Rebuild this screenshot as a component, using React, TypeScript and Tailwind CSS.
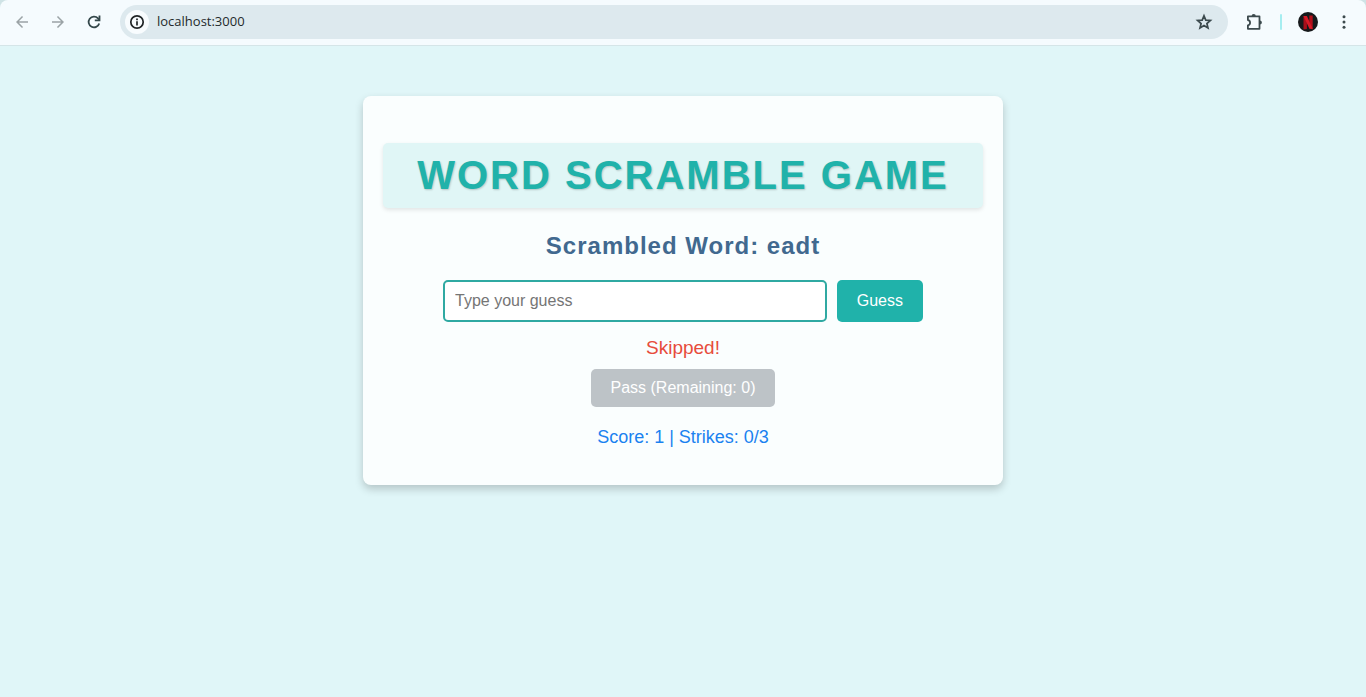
import { useState } from "react";
import { MdArrowBack, MdArrowForward } from "react-icons/md";

function ReloadIcon() {
  return (
    <svg width="20" height="20" viewBox="0 0 20 20" fill="none" stroke="#33474a" strokeWidth="1.8" aria-hidden="true">
      <path d="M15.2 11.4A5.4 5.4 0 1 1 14 6.3L15.4 7.8" />
      <path d="M15.5 3.6V8.3H10.8" />
    </svg>
  );
}

function InfoIcon() {
  return (
    <svg width="16" height="16" viewBox="0 0 16 16" fill="none" stroke="#1f2426" strokeWidth="1.7" aria-hidden="true">
      <circle cx="8" cy="8" r="6.2" />
      <path d="M8 7.2V11.4M8 4.5V6.2" />
    </svg>
  );
}

function StarIcon() {
  return (
    <svg width="20" height="20" viewBox="0 0 20 20" fill="none" stroke="#3c4a4d" strokeWidth="1.7" aria-hidden="true">
      <path d="M10 3.8 11.8 8.1 16.4 8.5 12.9 11.5 14 16 10 13.6 6 16 7.1 11.5 3.6 8.5 8.2 8.1Z" />
    </svg>
  );
}

function ExtensionIcon() {
  return (
    <svg width="20" height="20" viewBox="0 0 20 20" aria-hidden="true">
      <path d="M3.9 4.4H15.5V16.8H3.9V13.3a2.7 2.7 0 0 0 0-5.3Z" fill="none" stroke="#3c4a4d" strokeWidth="1.8" strokeLinejoin="round" />
      <path d="M7.6 4.2a2.1 2.1 0 0 1 4.2 0ZM15.8 8.4a2.1 2.1 0 0 1 0 4.2Z" fill="#3c4a4d" />
    </svg>
  );
}

function MenuIcon() {
  return (
    <svg width="20" height="20" viewBox="0 0 20 20" fill="#3c4a4d" aria-hidden="true">
      <circle cx="10" cy="4.7" r="1.5" />
      <circle cx="10" cy="10" r="1.5" />
      <circle cx="10" cy="15.3" r="1.5" />
    </svg>
  );
}

function ProfilePicture() {
  return (
    <svg width="20" height="20" viewBox="0 0 20 20" aria-hidden="true">
      <circle cx="10" cy="10" r="10" fill="#16191b" />
      <path d="M5.5 4h3.4v13l-3.4.6Z" fill="#a80f1a" />
      <path d="M11.3 3.6h3.4v13.6l-3.4-.5Z" fill="#b30f1a" />
      <path d="M5.5 4h3.4l5.8 13-3.4-.4Z" fill="#d81a26" />
    </svg>
  );
}

function BrowserBar() {
  return (
    <header className="bg-[#cfe3e6]">
      <div className="flex h-[46px] items-center rounded-t-lg border-b border-[#d5e5e8] bg-[#f5fbfe] px-3 pb-0.5">
        <nav className="flex shrink-0 gap-4" aria-label="Browser">
          <button aria-label="Back" className="flex size-5 items-center justify-center text-[#9ba3a6]">
            <MdArrowBack size={18} />
          </button>
          <button aria-label="Forward" className="flex size-5 items-center justify-center text-[#9ba3a6]">
            <MdArrowForward size={18} />
          </button>
          <button aria-label="Reload" className="flex size-5 items-center justify-center">
            <ReloadIcon />
          </button>
        </nav>
        <div className="ml-4 flex h-[34px] min-w-0 flex-1 items-center rounded-full bg-[#dde9ee] pr-3.5 pl-[5px]">
          <button aria-label="Site information" className="flex size-6 shrink-0 items-center justify-center rounded-full bg-[#f8fcfe]">
            <InfoIcon />
          </button>
          <input
            aria-label="Address"
            defaultValue="localhost:3000"
            className="ml-2 min-w-0 flex-1 bg-transparent font-['Open_Sans','Noto_Sans',sans-serif] text-[13px] text-[#24292b] outline-none"
          />
          <button aria-label="Bookmark this page" className="flex size-5 shrink-0 items-center justify-center">
            <StarIcon />
          </button>
        </div>
        <div className="ml-4 flex shrink-0 items-center">
          <button aria-label="Extensions" className="flex">
            <ExtensionIcon />
          </button>
          <span className="ml-4 h-4 w-0.5 rounded-full bg-[#a5edf0]" />
          <button aria-label="Profile" className="ml-4 flex">
            <ProfilePicture />
          </button>
          <button aria-label="Menu" className="ml-4 flex">
            <MenuIcon />
          </button>
        </div>
      </div>
    </header>
  );
}

export default function App() {
  const [guess, setGuess] = useState("");

  return (
    <div className="flex min-h-screen flex-col bg-[#e0f6f8] font-['Liberation_Sans',Arial,sans-serif]">
      <BrowserBar />
      <main className="mx-auto my-[50px] w-full max-w-[640px] rounded-lg bg-[#fafefe] px-5 pt-[47px] pb-[38px] text-center shadow-[0_4px_8px_rgba(0,0,0,0.2)]">
        <h1 className="rounded-[5px] bg-[#e0f6f6] py-2.5 text-[40px] leading-[45px] font-bold tracking-[2px] text-[#20b2aa] uppercase shadow-[0_2px_4px_rgba(0,0,0,0.1)] [text-shadow:1px_1px_2px_rgba(0,0,0,0.2)]">
          Word Scramble Game
        </h1>
        <h2 className="mt-6 text-2xl leading-7 font-bold tracking-[1px] text-[#41698f]">Scrambled Word: eadt</h2>
        <form className="mx-auto mt-5 flex w-4/5 gap-2.5" onSubmit={(event) => event.preventDefault()}>
          <input
            type="text"
            aria-label="Your guess"
            placeholder="Type your guess"
            value={guess}
            onChange={(event) => setGuess(event.target.value)}
            className="h-[42px] min-w-0 flex-1 rounded-[5px] border-2 border-[#2fa9a2] bg-white px-2.5 text-base text-[#333333] outline-none placeholder:text-[#757575]"
          />
          <button type="submit" className="rounded-[5px] bg-[#20b2aa] px-5 text-base text-white">
            Guess
          </button>
        </form>
        <p className="mt-[15px] text-[19px] leading-[22px] text-[#e74c3c]">Skipped!</p>
        <button disabled className="mt-2.5 h-[38px] rounded-[5px] bg-[#bdc3c7] px-5 text-base text-white">
          Pass (Remaining: 0)
        </button>
        <p className="mt-5 text-lg leading-5 text-[#1a82f0]">Score: 1 | Strikes: 0/3</p>
      </main>
    </div>
  );
}
